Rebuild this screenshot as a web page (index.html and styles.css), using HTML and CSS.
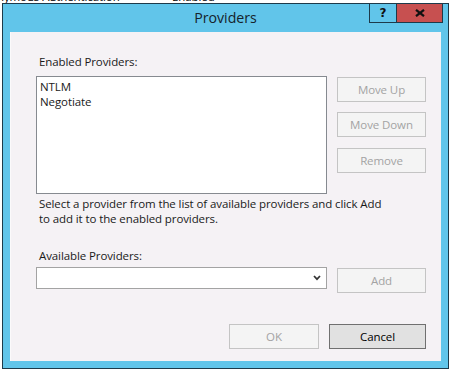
FILE: index.html
```html
<!DOCTYPE html>
<html lang="en">
<head>
<meta charset="utf-8">
<title>Providers</title>
<link rel="stylesheet" href="styles.css">
</head>
<body>
<div class="desktop">
  <div class="behind-row"><span class="behind-a">Anonymous Authentication</span><span class="behind-b">Enabled</span></div>
</div>
<div class="dialog">
  <div class="titlebar">
    <span></span>
    <div class="title">Providers</div>
    <div class="caption-btns">
      <div class="cap-help">?</div>
      <div class="cap-close">
        <svg width="10" height="8" viewBox="0 0 10 8"><path d="M1 0.8 L9 7.2 M9 0.8 L1 7.2" stroke="#111" stroke-width="2.2" fill="none"/></svg>
      </div>
    </div>
  </div>
  <div class="client">
    <div class="top-row">
      <div class="left-col">
        <div class="label">Enabled Providers:</div>
        <div class="listbox">
          <div class="item">NTLM</div>
          <div class="item">Negotiate</div>
        </div>
      </div>
      <div class="side-btns">
        <button class="btn disabled">Move Up</button>
        <button class="btn disabled">Move Down</button>
        <button class="btn disabled remove">Remove</button>
      </div>
    </div>
    <p class="desc">Select a provider from the list of available providers and click Add<br>to add it to the enabled providers.</p>
    <div class="label avail-label">Available Providers:</div>
    <div class="add-row">
      <div class="combo">
        <svg width="8" height="6" viewBox="0 0 8 6"><path d="M1 1 L4 4.2 L7 1" stroke="#333" stroke-width="1.7" fill="none"/></svg>
      </div>
      <button class="btn disabled add">Add</button>
    </div>
    <div class="footer">
      <button class="btn disabled ok">OK</button>
      <button class="btn cancel">Cancel</button>
    </div>
  </div>
</div>
</body>
</html>
```
FILE: styles.css
```css
* { box-sizing: border-box; }
html, body { margin: 0; padding: 0; }
body {
  width: 450px;
  height: 371px;
  background: #ffffff;
  font-family: "Open Sans", "Noto Sans", sans-serif;
  font-size: 11.5px;
  letter-spacing: -0.1px;
  color: #1a1a1a;
  overflow: hidden;
  position: relative;
}
.desktop { height: 371px; }
.behind-row {
  margin-top: -11px;
  line-height: 15px;
  white-space: nowrap;
  color: #000;
  display: flex;
}
.behind-a { margin-left: -24px; width: 196px; }
.dialog {
  position: absolute;
  left: 2px;
  top: 3px;
  width: 447px;
  height: 366px;
  border: 1px solid #1d3a4a;
  background: #61c5ea;
  padding: 0 7px 7px 7px;
  display: flex;
  flex-direction: column;
}
.titlebar {
  height: 28px;
  margin: 0 -7px;
  display: grid;
  grid-template-columns: 1fr auto 1fr;
  align-items: start;
}
.title {
  font-size: 14.2px;
  letter-spacing: 0;
  line-height: 28px;
  color: #16232b;
}
.caption-btns {
  justify-self: end;
  margin-top: -1px;
  margin-right: 5px;
  height: 20px;
  display: flex;
  border: 1px solid #1d3a4a;
}
.cap-help {
  width: 27px;
  border-right: 1px solid #1d3a4a;
  font-weight: bold;
  font-size: 12px;
  line-height: 18px;
  text-align: center;
  color: #111;
  font-family: "DejaVu Sans", sans-serif;
}
.cap-close {
  width: 45px;
  background: #c75050;
  display: flex;
  align-items: center;
  justify-content: center;
}
.client {
  flex: 1;
  background: #f5f2f5;
  border-left: 1px solid #fbfafb;
  padding: 22px 15px 0 25px;
  display: flex;
  flex-direction: column;
}
.label { line-height: 15px; padding-left: 3px; }
.top-row {
  display: flex;
  gap: 10px;
}
.left-col { width: 291px; }
.listbox {
  margin-top: 7px;
  height: 118px;
  border: 1px solid #868a90;
  background: #fff;
  padding: 2px 3px;
}
.item { line-height: 15px; }
.side-btns {
  margin-top: 23px;
  display: flex;
  flex-direction: column;
  gap: 10px;
}
.btn {
  width: 89px;
  height: 25px;
  padding: 0;
  font-family: inherit;
  font-size: 11.5px;
  letter-spacing: -0.1px;
  border: 1px solid #adadad;
  background: #e1e1e1;
  color: #000;
}
.btn.disabled {
  background: #f4f4f4;
  border-color: #c4c4c4;
  color: #a3a3a3;
}
.btn.remove { margin-top: 1px; }
.desc {
  margin: 2px 0 0 0;
  padding-left: 3px;
  line-height: 15px;
}
.avail-label { margin-top: 22px; }
.add-row {
  margin-top: 4px;
  display: flex;
  gap: 10px;
  align-items: flex-start;
}
.combo {
  width: 291px;
  height: 22px;
  border: 1px solid #a3a3a3;
  background: #fff;
  display: flex;
  justify-content: flex-end;
  align-items: center;
  padding-right: 5px;
}
.btn.add { margin-top: 1px; }
.footer {
  margin-top: 31px;
  display: flex;
  justify-content: flex-end;
  gap: 10px;
}
.btn.ok { width: 90px; }
.btn.cancel {
  width: 97px;
  background: #e1e1e1;
  border-color: #707070;
}
```
